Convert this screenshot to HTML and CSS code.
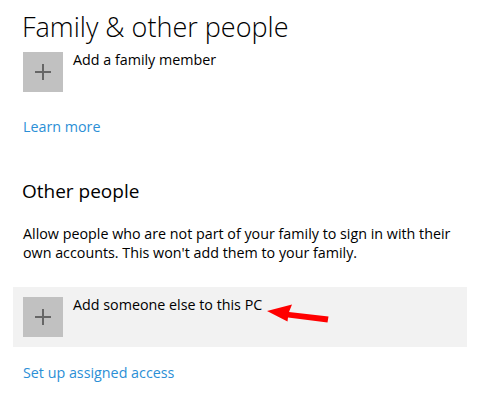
FILE: index.html
```html
<!DOCTYPE html>
<html>
<head>
<meta charset="utf-8">
<link rel="stylesheet" href="styles.css">
</head>
<body>
<div class="page">
  <h1 class="title">Family &amp; other people</h1>
  <div class="row">
    <div class="plus-box"><svg width="16" height="16" viewBox="0 0 16 16"><path d="M0 8H16M8 0V16" stroke="#666" stroke-width="2"/></svg></div>
    <div class="row-label">Add a family member</div>
  </div>
  <a class="link learn">Learn more</a>
  <h2 class="subtitle">Other people</h2>
  <p class="desc">Allow people who are not part of your family to sign in with their own accounts. This won't add them to your family.</p>
  <div class="row row-hover">
    <div class="plus-box"><svg width="16" height="16" viewBox="0 0 16 16"><path d="M0 8H16M8 0V16" stroke="#666" stroke-width="2"/></svg></div>
    <div class="row-label">Add someone else to this PC</div>
    <svg class="arrow" width="72" height="26" viewBox="0 0 72 26"><path d="M7 11 L32 4.5 L29 12 L68.5 16.5 L67.5 22.5 L28 17.5 L27.5 21.5 Z" fill="#f00"/></svg>
  </div>
  <a class="link access">Set up assigned access</a>
</div>
</body>
</html>
```
FILE: styles.css
```css
html, body { margin: 0; padding: 0; background: #fff; }
.page {
  width: 479px;
  height: 398px;
  overflow: hidden;
  font-family: "Open Sans", "Segoe UI", sans-serif;
  color: #000;
  padding: 0 12px 0 13px;
  box-sizing: border-box;
}
.title {
  margin: 8px 0 0 9px;
  font-size: 27px;
  font-weight: 300;
  line-height: 38px;
  letter-spacing: 0;
}
.row {
  position: relative;
  display: flex;
  align-items: flex-start;
  padding: 6px 10px 0;
  height: 54px;
  box-sizing: border-box;
}
.row-hover {
  background: #f2f2f2;
  margin-top: 25px;
  padding-top: 10px;
  height: 60px;
}
.plus-box {
  width: 40px;
  height: 40px;
  background: #c1c1c1;
  display: flex;
  align-items: center;
  justify-content: center;
  flex: none;
}
.row-label {
  margin-left: 10px;
  font-size: 14.3px;
  line-height: 18px;
  margin-top: -1px;
}
.link {
  display: block;
  color: #2b8fd6;
  font-size: 14.3px;
  line-height: 18px;
  margin-left: 10px;
}
.learn { margin-top: 18px; }
.subtitle {
  margin: 42px 0 0 9px;
  font-size: 19px;
  font-weight: 400;
  line-height: 26px;
}
.desc {
  margin: 20px 0 0 10px;
  font-size: 14.3px;
  line-height: 19px;
  width: 446px;
}
.access { margin-top: 17px; }
.arrow {
  position: absolute;
  left: 247px;
  top: 13px;
}
```
